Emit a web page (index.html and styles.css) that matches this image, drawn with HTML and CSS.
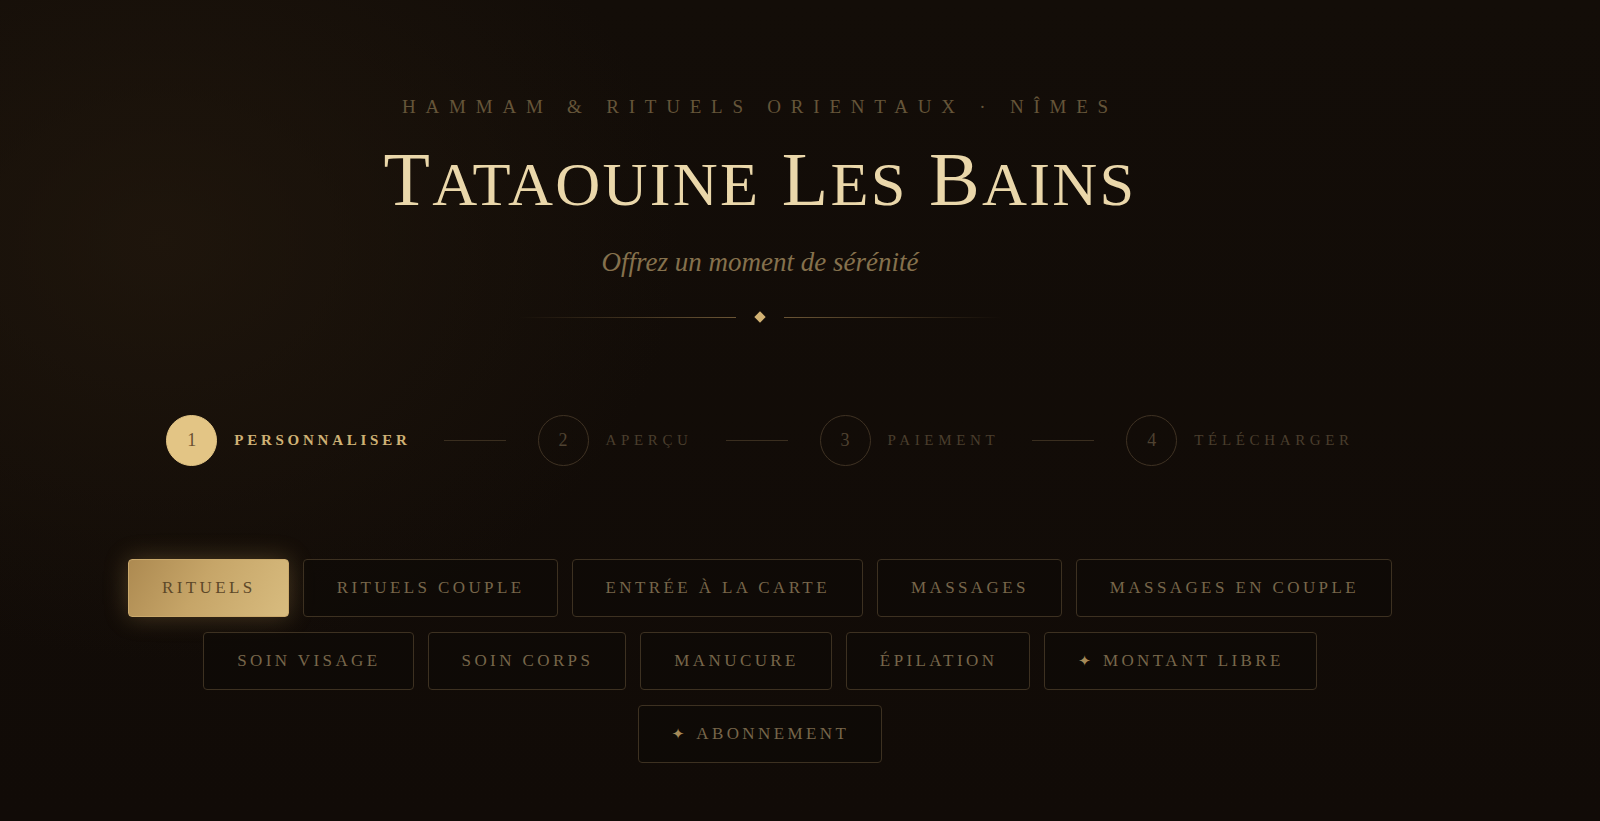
FILE: index.html
```html
<!DOCTYPE html>
<html lang="fr">
<head>
<meta charset="utf-8">
<title>Tataouine Les Bains</title>
<link rel="stylesheet" href="styles.css">
</head>
<body>
<main class="page">
  <header class="hero">
    <p class="eyebrow">Hammam &amp; Rituels Orientaux · Nîmes</p>
    <h1 class="title">T<span class="sc">ataouine</span> L<span class="sc">es</span> B<span class="sc">ains</span></h1>
    <p class="tagline">Offrez un moment de sérénité</p>
    <div class="divider">
      <span class="div-line left"></span>
      <span class="diamond"></span>
      <span class="div-line right"></span>
    </div>
  </header>

  <ol class="steps">
    <li class="step active"><span class="circle">1</span><span class="label">Personnaliser</span></li>
    <li class="sep"></li>
    <li class="step"><span class="circle">2</span><span class="label">Aperçu</span></li>
    <li class="sep"></li>
    <li class="step"><span class="circle">3</span><span class="label">Paiement</span></li>
    <li class="sep"></li>
    <li class="step"><span class="circle">4</span><span class="label">Télécharger</span></li>
  </ol>

  <div class="cats">
    <button class="cat active">Rituels</button>
    <button class="cat">Rituels couple</button>
    <button class="cat">Entrée à la carte</button>
    <button class="cat">Massages</button>
    <button class="cat">Massages en couple</button>
    <button class="cat">Soin visage</button>
    <button class="cat">Soin corps</button>
    <button class="cat">Manucure</button>
    <button class="cat">Épilation</button>
    <button class="cat"><span class="star">✦</span>Montant libre</button>
    <button class="cat"><span class="star">✦</span>Abonnement</button>
  </div>
</main>
</body>
</html>
```

FILE: styles.css
```css
* { box-sizing: border-box; }

html, body {
  margin: 0;
  padding: 0;
  height: 100%;
}

body {
  background-color: #110c07;
  background-image:
    radial-gradient(ellipse 520px 420px at 160px 240px, rgba(34, 24, 13, 0.75), rgba(17, 12, 7, 0) 100%),
    linear-gradient(180deg, #130d08 0%, #110b07 100%);
  font-family: "Liberation Serif", "DejaVu Serif", serif;
  color: #e9d6a7;
  overflow: hidden;
}

.page {
  width: 1520px;
  display: flex;
  flex-direction: column;
  align-items: center;
  padding-top: 97px;
}

.hero {
  display: flex;
  flex-direction: column;
  align-items: center;
}

.eyebrow {
  margin: 0;
  font-size: 19px;
  line-height: 19px;
  letter-spacing: 0.515em;
  text-transform: uppercase;
  color: #655539;
}

.title {
  margin: 25px 0 0;
  font-size: 76px;
  line-height: 77px;
  font-weight: 400;
  letter-spacing: 0.03em;
  color: #ead7aa;
}

.title .sc {
  text-transform: uppercase;
  font-size: 0.82em;
}

.tagline {
  margin: 24px 0 0;
  font-size: 27px;
  line-height: 32px;
  font-style: italic;
  color: #85714d;
}

.divider {
  margin-top: 35px;
  display: flex;
  align-items: center;
  gap: 20px;
  height: 8px;
}

.div-line {
  display: block;
  width: 218px;
  height: 1px;
}

.div-line.left {
  background: linear-gradient(90deg, rgba(110, 88, 55, 0) 0%, #6b5535 100%);
}

.div-line.right {
  background: linear-gradient(90deg, #6b5535 0%, rgba(110, 88, 55, 0) 100%);
}

.diamond {
  width: 8px;
  height: 8px;
  background: #d2b273;
  transform: rotate(45deg);
}

.steps {
  list-style: none;
  margin: 94px 0 0;
  padding: 0;
  display: flex;
  align-items: center;
  justify-content: center;
}

.step {
  display: flex;
  align-items: center;
  gap: 17px;
}

.circle {
  width: 51px;
  height: 51px;
  border-radius: 50%;
  border: 1px solid #3f3223;
  display: flex;
  align-items: center;
  justify-content: center;
  font-size: 18px;
  color: #4f4231;
}

.label {
  font-size: 15px;
  letter-spacing: 0.31em;
  text-transform: uppercase;
  color: #4a3e2d;
}

.step.active .circle {
  background: #e3c585;
  border-color: #e3c585;
  color: #6a5130;
}

.step.active .label {
  font-weight: 700;
  letter-spacing: 0.25em;
  color: #cfb275;
}

.sep {
  width: 62px;
  height: 1px;
  background: #3a2e1f;
  margin: 0 32px 0 33px;
}

.cats {
  width: 1300px;
  margin-top: 93px;
  display: flex;
  flex-wrap: wrap;
  justify-content: center;
  gap: 15px 14px;
}

.cat {
  height: 58px;
  padding: 0 32px 0 33px;
  display: flex;
  align-items: center;
  background: rgba(14, 10, 6, 0.6);
  border: 1px solid #3d3121;
  border-radius: 4px;
  font-family: "Liberation Serif", "DejaVu Serif", serif;
  font-size: 17px;
  letter-spacing: 0.2em;
  text-transform: uppercase;
  color: #77664a;
  cursor: pointer;
}

.cat.active {
  background: linear-gradient(120deg, #ad8a51 0%, #c6a568 45%, #d8bc7f 100%);
  border-color: #caa96c;
  color: #5d4828;
  box-shadow: 0 0 24px rgba(200, 160, 90, 0.3);
}

.star {
  font-family: "DejaVu Sans", sans-serif;
  font-size: 15px;
  letter-spacing: 0;
  margin-right: 12px;
  color: #a58a58;
}
```
